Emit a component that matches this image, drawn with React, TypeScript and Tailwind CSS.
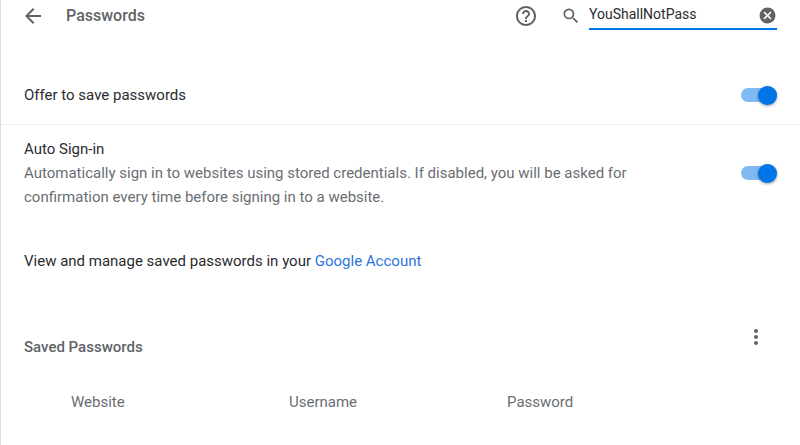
import React, { useState } from 'react';
import {
  MdArrowBack,
  MdCancel,
  MdHelpOutline,
  MdMoreVert,
  MdSearch,
} from 'react-icons/md';

function Toggle({ id }: { id: string }) {
  const [checked, setChecked] = useState(true);

  return (
    <input
      id={id}
      type="checkbox"
      role="switch"
      checked={checked}
      onChange={(e) => setChecked(e.target.checked)}
      className="relative h-[14px] w-9 shrink-0 cursor-pointer appearance-none rounded-full bg-[#bdc1c6] checked:bg-[#80baf3] before:absolute before:-top-[2px] before:left-0 before:size-[19px] before:rounded-full before:bg-white before:shadow-[0_1px_3px_rgba(0,0,0,0.4)] checked:before:left-[17px] checked:before:bg-[#0075e8]"
    />
  );
}

export default function App() {
  const [search, setSearch] = useState('YouShallNotPass');

  return (
    <div className="min-h-screen border-l border-[#dcdcdc] bg-white font-[Roboto,sans-serif] text-[15px] leading-6 text-[#2b2c2f]">
      <header className="flex h-[31px] items-center pl-5 pr-[23px] text-[#5f6368]">
        <button aria-label="Back">
          <MdArrowBack className="size-6" />
        </button>
        <h1 className="ml-[21px] text-base font-medium">Passwords</h1>
        <button aria-label="Help" className="ml-auto">
          <MdHelpOutline className="size-6" />
        </button>
        <label htmlFor="search" className="ml-[23px]" aria-label="Search passwords">
          <MdSearch className="size-5" />
        </label>
        <div className="ml-2 flex h-[30px] w-[188px] items-center self-start border-b-2 border-[#0075e8]">
          <input
            id="search"
            type="text"
            value={search}
            onChange={(e) => setSearch(e.target.value)}
            className="min-w-0 flex-1 text-sm text-[#2b2c2f] outline-none"
          />
          <button
            aria-label="Clear search"
            className="pt-[2px]"
            onClick={() => setSearch('')}
          >
            <MdCancel className="size-[19px]" />
          </button>
        </div>
      </header>

      <main>
        <section className="mt-[34px] flex h-[60px] items-center justify-between border-b border-[#eeeeee] px-[23px]">
          <label htmlFor="offer">Offer to save passwords</label>
          <Toggle id="offer" />
        </section>

        <section className="mt-3 flex items-center justify-between px-[23px]">
          <div className="max-w-[640px]">
            <label htmlFor="auto">Auto Sign-in</label>
            <p className="text-[#6a6e73]">
              Automatically sign in to websites using stored credentials. If
              disabled, you will be asked for confirmation every time before
              signing in to a website.
            </p>
          </div>
          <Toggle id="auto" />
        </section>

        <p className="mt-10 px-[23px]">
          View and manage saved passwords in your{' '}
          <a href="#account" className="text-[#2a75dd]">
            Google Account
          </a>
        </p>

        <section className="mt-[52px]">
          <div className="flex h-[34px] items-start justify-between pl-[23px] pr-8">
            <h2 className="self-end font-medium text-[#5f6368]">
              Saved Passwords
            </h2>
            <button aria-label="More actions">
              <MdMoreVert className="size-6 text-[#5f6368]" />
            </button>
          </div>
          <div className="mt-[31px] pl-[70px] pr-[75px]">
            <table className="w-full table-fixed text-left text-[#6a6e73]">
              <thead>
                <tr>
                  {columns.map((column) => (
                    <th key={column} scope="col" className="p-0 font-normal">
                      {column}
                    </th>
                  ))}
                </tr>
              </thead>
            </table>
          </div>
        </section>
      </main>
    </div>
  );
}

const columns = ['Website', 'Username', 'Password'];
